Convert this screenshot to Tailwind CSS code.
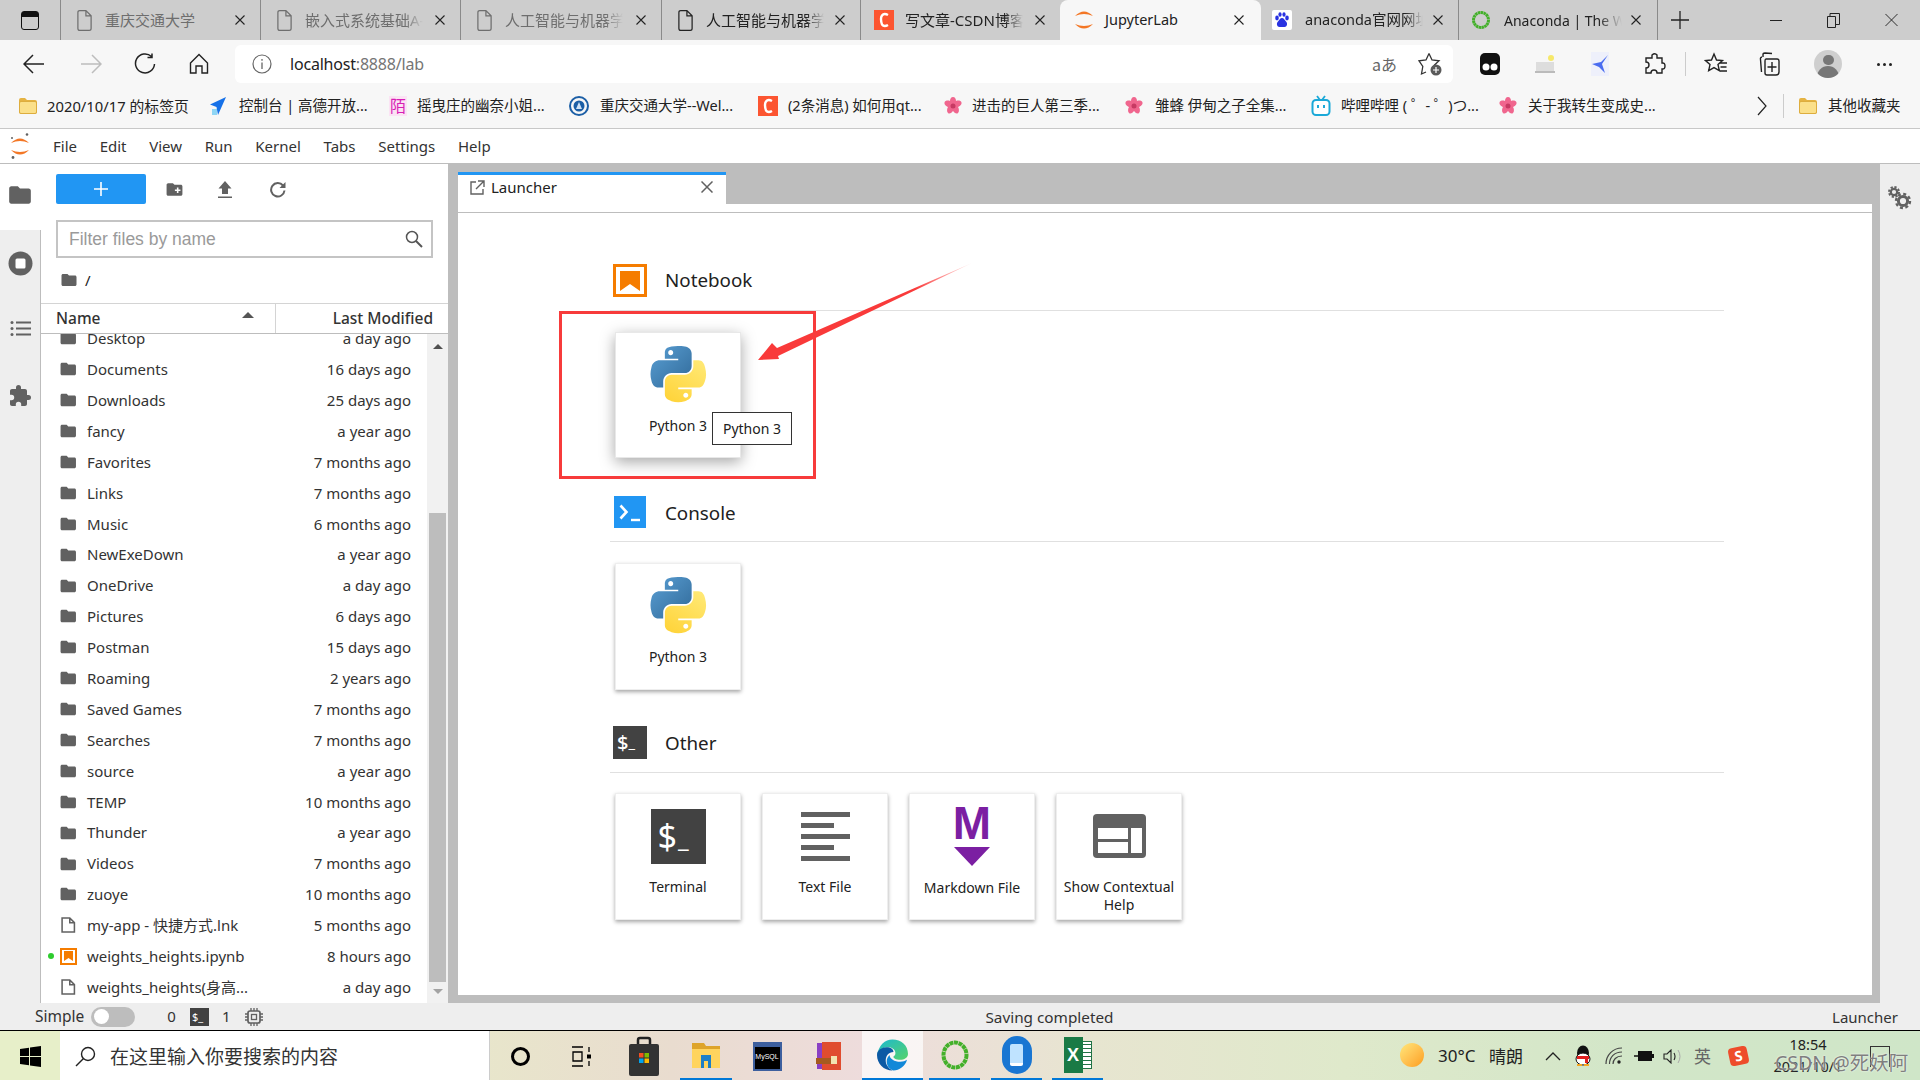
<!DOCTYPE html>
<html lang="zh-CN">
<head>
<meta charset="UTF-8">
<title>JupyterLab</title>
<script src="https://cdn.jsdelivr.net/npm/@tailwindcss/browser@4"></script>
</head>
<body class="relative w-[1920px] h-[1080px] overflow-hidden bg-white text-[#212121] font-['Noto_Sans','Noto_Sans_CJK_SC',sans-serif]">

<svg width="0" height="0" class="absolute">
  <defs>
    <linearGradient id="pyBlue" x1="0" y1="0" x2="1" y2="1"><stop offset="0" stop-color="#5a9fd4"/><stop offset="1" stop-color="#306998"/></linearGradient>
    <linearGradient id="pyYellow" x1="0.2" y1="1" x2="0.8" y2="0"><stop offset="0" stop-color="#ffd43b"/><stop offset="1" stop-color="#ffe873"/></linearGradient>
    <linearGradient id="arrowFade" gradientUnits="userSpaceOnUse" x1="972" y1="263" x2="915" y2="289"><stop offset="0" stop-color="#ff3b3b" stop-opacity="0.1"/><stop offset="1" stop-color="#f93a3a"/></linearGradient>
    <symbol id="folder" viewBox="0 0 24 24"><path fill="#616161" d="M10 4H4c-1.1 0-1.99.9-1.99 2L2 18c0 1.1.9 2 2 2h16c1.1 0 2-.9 2-2V8c0-1.1-.9-2-2-2h-8l-2-2z"/></symbol>
    <symbol id="page" viewBox="0 0 24 24"><path fill="none" stroke="#616161" stroke-width="2" d="M4 3h10l6 6v12H4zM14 3v6h6"/></symbol>
    <symbol id="python" viewBox="0 0 112 114">
      <path fill="url(#pyBlue)" d="M54.9 0C50.3 0 46 .4 42.1 1.1 30.8 3.1 28.7 7.3 28.7 15v10.3h26.8v3.4H18.6C10.8 28.7 4 33.3 1.9 42.3-.6 52.5-.7 58.8 1.9 69.5c1.9 7.9 6.4 13.6 14.2 13.6h9.3V70.8c0-8.8 7.6-16.6 16.7-16.6h26.8c7.5 0 13.4-6.1 13.4-13.6V15c0-7.3-6.1-12.7-13.4-13.9C64.3.3 59.5 0 54.9 0zM40.4 8.2c2.8 0 5 2.3 5 5.1 0 2.8-2.3 5.1-5 5.1-2.8 0-5-2.3-5-5.1 0-2.8 2.3-5.1 5-5.1z"/>
      <path fill="url(#pyYellow)" d="M85.6 28.7v11.9c0 9.2-7.8 17-16.8 17H42.1c-7.3 0-13.4 6.3-13.4 13.6v25.5c0 7.3 6.3 11.5 13.4 13.6 8.5 2.5 16.6 3 26.8 0 6.8-2 13.4-5.9 13.4-13.6V86.5H55.5v-3.4h40.2c7.8 0 10.7-5.4 13.4-13.6 2.8-8.4 2.7-16.5 0-27.2-1.9-7.8-5.6-13.6-13.4-13.6zM70.6 93.3c2.8 0 5 2.3 5 5.1 0 2.8-2.3 5.1-5 5.1-2.8 0-5-2.3-5-5.1 0-2.8 2.3-5.1 5-5.1z"/>
    </symbol>
    <symbol id="close" viewBox="0 0 12 12"><path fill="none" stroke="#222" stroke-width="1.1" d="M1.5 1.5l9 9M10.5 1.5l-9 9"/></symbol>
    <symbol id="tabdoc" viewBox="0 0 18 24"><path fill="none" stroke="currentColor" stroke-width="1.3" d="M2 3.5q0-2 2-2h6.5L16 7v13.500q0 2-2 2H4q-2 0-2-2zM10.500 1.500V7H16"/></symbol>
    <symbol id="flower" viewBox="0 0 20 20"><path fill="#f0668e" d="M10 1c2 0 3 2 3 4 2-1 5-.5 5.500 1.500S16.500 10.500 15 11c1 1.500 1.500 4.500 0 6s-4-.5-5-2c-1 1.500-3.500 3.500-5 2s-1-4.500 0-6C3.500 10.500 1 8.500 1.500 6.500S5 4 7 5c0-2 1-4 3-4z"/><circle cx="10" cy="10" r="2.500" fill="#c73a63"/></symbol>
    <symbol id="csdn" viewBox="0 0 20 20"><rect width="20" height="20" fill="#fc5531"/><path fill="none" stroke="#fff" stroke-width="2.400" d="M14 5Q10 2.800 8 5.500t0 9Q10 17.200 14 15"/></symbol>
    <symbol id="yfolder" viewBox="0 0 20 20"><path fill="#e5b342" d="M1 4q0-2 2-2h4l2 2h8q2 0 2 2v10q0 2-2 2H3q-2 0-2-2z"/><path fill="#fbe08a" stroke="#d8a633" stroke-width=".8" d="M1.500 7q0-1.500 1.500-1.500h14Q18.500 5.500 18.500 7v9q0 1.500-1.500 1.500H3Q1.500 17.500 1.500 16z"/></symbol>
  </defs>
</svg>

<!-- browser tabs -->
<div class="flex h-10 bg-[#cdcdcd] text-[15px]">
  <div class="w-[60px] h-full flex items-center justify-center">
    <div class="w-[18px] h-[19px] border-[1.5px] border-[#111] rounded-[3px] bg-gradient-to-b from-[#111] from-30% to-transparent to-30%"></div>
  </div>
  <div class="w-[200px] flex items-center pl-[15px] pr-[14px] border-l border-[#8a8a8a] text-[#6e6e6e]">
    <svg class="w-[17px] h-[23px] shrink-0"><use href="#tabdoc"/></svg>
    <span class="ml-[12px] w-[120px] whitespace-nowrap overflow-hidden">重庆交通大学</span>
    <svg class="ml-auto w-3 h-3 shrink-0"><use href="#close"/></svg>
  </div>
  <div class="w-[200px] flex items-center pl-[15px] pr-[14px] border-l border-[#8a8a8a] text-[#6e6e6e]">
    <svg class="w-[17px] h-[23px] shrink-0"><use href="#tabdoc"/></svg>
    <span class="ml-[12px] w-[118px] whitespace-nowrap overflow-hidden [mask-image:linear-gradient(90deg,#000_85%,transparent)]">嵌入式系统基础A-</span>
    <svg class="ml-auto w-3 h-3 shrink-0"><use href="#close"/></svg>
  </div>
  <div class="w-[201px] flex items-center pl-[15px] pr-[14px] border-l border-[#8a8a8a] text-[#6e6e6e]">
    <svg class="w-[17px] h-[23px] shrink-0"><use href="#tabdoc"/></svg>
    <span class="ml-[12px] w-[118px] whitespace-nowrap overflow-hidden [mask-image:linear-gradient(90deg,#000_85%,transparent)]">人工智能与机器学习</span>
    <svg class="ml-auto w-3 h-3 shrink-0"><use href="#close"/></svg>
  </div>
  <div class="w-[199px] flex items-center pl-[15px] pr-[14px] border-l border-[#8a8a8a] text-[#222]">
    <svg class="w-[17px] h-[23px] shrink-0"><use href="#tabdoc"/></svg>
    <span class="ml-[12px] w-[118px] whitespace-nowrap overflow-hidden [mask-image:linear-gradient(90deg,#000_85%,transparent)]">人工智能与机器学习</span>
    <svg class="ml-auto w-3 h-3 shrink-0"><use href="#close"/></svg>
  </div>
  <div class="w-[200px] flex items-center pl-[13px] pr-[14px] border-l border-[#8a8a8a] text-[#222]">
    <svg class="w-5 h-5 shrink-0"><use href="#csdn"/></svg>
    <span class="ml-[11px] w-[118px] whitespace-nowrap overflow-hidden [mask-image:linear-gradient(90deg,#000_85%,transparent)]">写文章-CSDN博客</span>
    <svg class="ml-auto w-3 h-3 shrink-0"><use href="#close"/></svg>
  </div>
  <div class="w-[201px] flex items-center pl-[14px] pr-[16px] bg-[#f7f7f7] rounded-t-[8px] text-[#222]">
    <svg class="w-5 h-5 shrink-0" viewBox="0 0 20 20"><path fill="#f37726" d="M1 6Q10-3 19 6 10 2 1 6zM1 14q9 9 18 0-9 4-18 0z"/></svg>
    <span class="ml-[11px] w-[110px] whitespace-nowrap text-[14.5px]">JupyterLab</span>
    <svg class="ml-auto w-3 h-3 shrink-0"><use href="#close"/></svg>
  </div>
  <div class="w-[197px] flex items-center pl-[11px] pr-[14px] text-[#222]">
    <svg class="w-5 h-5 shrink-0" viewBox="0 0 20 20"><rect width="20" height="20" rx="2" fill="#fff"/><g fill="#2932e1"><ellipse cx="5" cy="8" rx="1.800" ry="2.400"/><ellipse cx="8" cy="4.500" rx="1.600" ry="2.300"/><ellipse cx="12" cy="4.500" rx="1.600" ry="2.300"/><ellipse cx="15" cy="8" rx="1.800" ry="2.400"/><path d="M10 8c2 0 2.500 2 4 3.500 2 2 1 5.500-1.500 5.500H7.500C5 17 4 13.500 6 11.500 7.500 10 8 8 10 8z"/></g></svg>
    <span class="ml-[13px] w-[118px] text-[14.5px] whitespace-nowrap overflow-hidden [mask-image:linear-gradient(90deg,#000_85%,transparent)]">anaconda官网网址</span>
    <svg class="ml-auto w-3 h-3 shrink-0"><use href="#close"/></svg>
  </div>
  <div class="w-[199px] flex items-center pl-[12px] pr-[15px] border-l border-[#8a8a8a] text-[#222]">
    <svg class="w-5 h-[22px] shrink-0" viewBox="0 0 20 22"><circle cx="10" cy="11" r="7.500" fill="none" stroke="#43b02a" stroke-width="3" stroke-dasharray="2.500 .4"/></svg>
    <span class="ml-[13px] w-[118px] text-[14px] whitespace-nowrap overflow-hidden [mask-image:linear-gradient(90deg,#000_80%,transparent)]">Anaconda | The World's</span>
    <svg class="ml-auto w-3 h-3 shrink-0"><use href="#close"/></svg>
  </div>
  <div class="flex items-center pl-[13px] border-l border-[#8a8a8a]">
    <svg class="w-[18px] h-[18px]" viewBox="0 0 18 18"><path stroke="#222" stroke-width="1.300" d="M9 0v18M0 9h18"/></svg>
  </div>
  <div class="ml-auto flex items-center pr-[22px] gap-[45px]">
    <div class="w-3 h-px bg-[#222]"></div>
    <svg class="w-[13px] h-[15px]" viewBox="0 0 13 15"><path fill="none" stroke="#222" d="M.5 3.500h8v11h-8zM3 3.500V.5h9.500v11H9"/></svg>
    <svg class="w-[13px] h-[14px]" viewBox="0 0 14 14"><path stroke="#222" d="M.5.5l13 13M13.500.5l-13 13"/></svg>
  </div>
</div>

<!-- browser toolbar -->
<div class="flex items-center h-12 bg-[#f7f7f7]">
  <div class="w-[235px] flex items-center">
    <svg class="ml-[23px] w-[22px] h-[22px]" viewBox="0 0 22 22"><path fill="none" stroke="#222" stroke-width="1.500" d="M21 11H2M10 2l-9 9 9 9"/></svg>
    <svg class="ml-[35px] w-[22px] h-[22px]" viewBox="0 0 22 22"><path fill="none" stroke="#bdbdbd" stroke-width="1.500" d="M1 11h19M12 2l9 9-9 9"/></svg>
    <svg class="ml-[32px] w-[22px] h-[22px]" viewBox="0 0 22 22"><path fill="none" stroke="#222" stroke-width="1.500" d="M17.500 3.500A9.500 9.500 0 1 0 20.500 11M18 .5v4h-4.500"/></svg>
    <svg class="ml-[33px] w-[20px] h-[22px]" viewBox="0 0 20 22"><path fill="none" stroke="#222" stroke-width="1.400" d="M1.500 10L10 1.500l8.500 8.500v10h-5.500v-7H7v7H1.500z"/></svg>
  </div>
  <div class="flex items-center w-[1218px] h-[38px] bg-white rounded-md -mt-[1px]">
    <svg class="ml-[17px] w-[20px] h-[20px]" viewBox="0 0 20 20"><circle cx="10" cy="10" r="9" fill="none" stroke="#666" stroke-width="1.200"/><path stroke="#666" stroke-width="1.300" d="M10 8.500V15M10 5v1.800"/></svg>
    <span class="ml-[18px] text-[16px] tracking-[-0.2px] text-[#222]">localhost<span class="text-[#757575]">:8888/lab</span></span>
    <span class="ml-auto text-[16px] text-[#666] font-['Noto_Sans_CJK_JP',sans-serif]">aあ</span>
    <svg class="ml-[21px] mr-[11px] w-[24px] h-[24px]" viewBox="0 0 24 24"><path fill="none" stroke="#333" stroke-width="1.300" d="M11 1.500l3 6.500 7 .8-5 4.700 1 4M8 20l-4.500 2 1.300-7.500L1 8.800 8 8l3-6.500"/><circle cx="18" cy="18" r="5.500" fill="#5a5a5a"/><path stroke="#fff" stroke-width="1.200" d="M18 15v6M15 18h6"/></svg>
  </div>
  <svg class="ml-[26px] w-[22px] h-[26px]" viewBox="0 0 22 26"><rect x="1" y="2" width="20" height="22" rx="5" fill="#111"/><circle cx="7" cy="16" r="3.500" fill="#fff"/><circle cx="15" cy="16" r="3.500" fill="#fff"/></svg>
  <svg class="ml-[32px] w-[24px] h-[24px]" viewBox="0 0 24 24"><path fill="#ddd" d="M3 10h18v9H3z"/><path fill="#bbb" d="M2 19h20v2H2z"/><circle cx="18" cy="6" r="3" fill="#f6e86a"/></svg>
  <svg class="ml-[31px] w-[24px] h-[26px]" viewBox="0 0 24 26"><rect x="3" y="1" width="18" height="24" fill="#eef0fb"/><path fill="#4a6cf0" d="M20 4l-6 9 3 9-6-6-7-3 9-2z"/></svg>
  <svg class="ml-[31px] w-[24px] h-[24px]" viewBox="0 0 24 24"><path fill="none" stroke="#222" stroke-width="1.400" d="M9 3q3-2.500 5 0v3h5v5q3-.5 3 3t-3 3v4h-5q0-3-3-3t-3 3H3v-5q3 0 3-3T3 10V6h6z"/></svg>
  <div class="ml-[18px] w-px h-6 bg-[#ccc]"></div>
  <svg class="ml-[18px] w-[24px] h-[24px]" viewBox="0 0 24 24"><path fill="none" stroke="#222" stroke-width="1.400" d="M10 2l2.500 6 6 .6-4.500 4 1.300 6-5.300-3-5.300 3 1.300-6-4.500-4 6-.6zM16 11h7M16.500 15h6M16 19h7"/></svg>
  <svg class="ml-[30px] w-[24px] h-[26px]" viewBox="0 0 24 26"><path fill="none" stroke="#222" stroke-width="1.400" d="M5 6V3.500Q5 2 7 2l7 .5M4 6q-2 .5-1.500 2.500l1 12.500M8 8h11q2 0 2 2v11q0 3-3 3H9q-2 0-2-2V10q0-2 1-2zM14 11v10M9.500 16h9"/></svg>
  <div class="ml-[32px] w-[28px] h-[28px] rounded-full overflow-hidden bg-[#cfcfcf] flex flex-col items-center">
    <div class="mt-[5px] w-[11px] h-[12px] rounded-full bg-[#777]"></div>
    <div class="mt-[1px] w-[22px] h-[14px] rounded-t-full bg-[#777]"></div>
  </div>
  <div class="ml-[35px] flex gap-[3px]">
    <div class="w-[3px] h-[3px] rounded-full bg-[#222]"></div>
    <div class="w-[3px] h-[3px] rounded-full bg-[#222]"></div>
    <div class="w-[3px] h-[3px] rounded-full bg-[#222]"></div>
  </div>
</div>

<!-- bookmarks -->
<div class="flex items-center h-[41px] pb-[4px] pl-[18px] bg-[#f7f7f7] border-b border-[#c8c8c8] text-[14.5px] text-[#222] whitespace-nowrap">
  <div class="w-[191px] flex items-center gap-[9px] text-[14.800px]"><svg class="w-5 h-5 shrink-0"><use href="#yfolder"/></svg>2020/10/17 的标签页</div>
  <div class="w-[180px] flex items-center gap-[12px]"><svg class="w-[18px] h-5 shrink-0" viewBox="0 0 18 20"><path fill="#8fd6f5" d="M3 13h5v6H3z"/><path fill="#1671e8" d="M17 1L9 19 7.500 11 1 8.500z"/></svg>控制台 | 高德开放...</div>
  <div class="w-[180px] flex items-center gap-[10px]"><div class="w-[18px] h-5 shrink-0 bg-[#fbe3f4] text-[#d81eb5] text-[16px] leading-5 text-center">陌</div>摇曳庄的幽奈小姐...</div>
  <div class="w-[189px] flex items-center gap-[11px]"><svg class="w-5 h-5 shrink-0" viewBox="0 0 20 20"><circle cx="10" cy="10" r="9" fill="none" stroke="#1c5fa6" stroke-width="2"/><circle cx="10" cy="10" r="5.500" fill="#1c5fa6"/><path fill="#cfe2f5" d="M10 6l3 7H7z"/></svg>重庆交通大学--Wel...</div>
  <div class="w-[185px] flex items-center gap-[10px]"><svg class="w-5 h-5 shrink-0"><use href="#csdn"/></svg>(2条消息) 如何用qt...</div>
  <div class="w-[181px] flex items-center gap-[9px]"><svg class="w-[20px] h-5 shrink-0"><use href="#flower"/></svg>进击的巨人第三季...</div>
  <div class="w-[187px] flex items-center gap-[11px]"><svg class="w-[20px] h-5 shrink-0"><use href="#flower"/></svg>雏蜂 伊甸之子全集...</div>
  <div class="w-[187px] flex items-center gap-[10px]"><svg class="w-[20px] h-[22px] shrink-0" viewBox="0 0 20 22"><path stroke="#1ca9d8" stroke-width="1.800" d="M6 1l3 4M14 1l-3 4"/><rect x="1.500" y="5" width="17" height="15" rx="3.500" fill="#fff" stroke="#1ca9d8" stroke-width="2"/><path stroke="#1ca9d8" stroke-width="2" d="M7 10v3M13 10v3"/></svg>哔哩哔哩 ( ゜- ゜)つ...</div>
  <div class="w-[259px] flex items-center gap-[10px]"><svg class="w-[20px] h-5 shrink-0"><use href="#flower"/></svg>关于我转生变成史...</div>
  <svg class="w-[10px] h-[20px]" viewBox="0 0 10 20"><path fill="none" stroke="#222" stroke-width="1.200" d="M1 1l8 9-8 9"/></svg>
  <div class="ml-[16px] w-px h-[24px] bg-[#ccc]"></div>
  <svg class="ml-[14px] w-5 h-5 shrink-0"><use href="#yfolder"/></svg>
  <span class="ml-[10px]">其他收藏夹</span>
</div>

<!-- jupyter menu -->
<div class="flex items-center h-[35px] border-b border-[#bdbdbd] text-[15px] text-[#333]">
  <svg class="ml-[11px] w-[20px] h-[27px]" viewBox="0 0 20 27"><path fill="#f37726" d="M0 10Q9 1 18 10 9 6 0 10zM0 17q9 9 18 0-9 4-18 0z"/><circle cx="16" cy="1.500" r="1.300" fill="#616161"/><circle cx="1" cy="5" r="1" fill="#616161"/><circle cx="2" cy="24.500" r="1.400" fill="#616161"/></svg>
  <div class="ml-[22px] flex gap-[22.700px] pt-[1px]">
    <span>File</span><span>Edit</span><span>View</span><span>Run</span><span>Kernel</span><span>Tabs</span><span>Settings</span><span>Help</span>
  </div>
</div>

<!-- jupyter main -->
<div class="flex h-[839px] bg-[#bdbdbd]">
  <div class="w-[41px] bg-[#eeeeee] flex flex-col">
    <div class="h-[66px] bg-white flex items-center justify-center pr-[1px]">
      <svg class="w-[26px] h-[26px] mt-[-4px]"><use href="#folder"/></svg>
    </div>
    <div class="flex-1 border-r border-[#bdbdbd] flex flex-col items-center">
      <svg class="mt-[21px] w-[25px] h-[25px]" viewBox="0 0 25 25"><circle cx="12.500" cy="12.500" r="12" fill="#616161"/><rect x="7.500" y="7.500" width="10" height="10" rx="1.500" fill="#fff"/></svg>
      <svg class="mt-[44px] w-[21px] h-[17px]" viewBox="0 0 21 17"><path fill="#616161" d="M6 1.500h15v2H6zM6 7.500h15v2H6zM6 13.500h15v2H6z"/><circle cx="2" cy="2.500" r="1.500" fill="#616161"/><circle cx="2" cy="8.500" r="1.500" fill="#616161"/><circle cx="2" cy="14.500" r="1.500" fill="#616161"/></svg>
      <svg class="mt-[47px] w-[24px] h-[24px]" viewBox="0 0 24 24"><path fill="#616161" d="M20.500 11H19V7c0-1.100-.9-2-2-2h-4V3.500a2.500 2.500 0 0 0-5 0V5H4c-1.100 0-2 .9-2 2v3.800h1.500a2.700 2.700 0 0 1 0 5.400H2V20c0 1.100.9 2 2 2h3.800v-1.500a2.700 2.700 0 0 1 5.400 0V22H17c1.100 0 2-.9 2-2v-4h1.500a2.500 2.500 0 0 0 0-5z"/></svg>
    </div>
  </div>

  <!-- file browser -->
  <div class="w-[407px] bg-white flex flex-col">
    <div class="flex items-center h-[56px] pt-[10px] pb-[16px] pl-[15px] shrink-0">
      <div class="w-[90px] h-[30px] bg-[#2196f3] rounded-[2px] flex items-center justify-center">
        <svg class="w-[16px] h-[16px] ml-[-1px]" viewBox="0 0 16 16"><path stroke="#fff" stroke-width="1.600" d="M8 1v14M1 8h14"/></svg>
      </div>
      <svg class="ml-[19px] w-[19px] h-[19px]" viewBox="0 0 24 24"><path fill="#616161" d="M10 4H4c-1.100 0-2 .9-2 2v12c0 1.100.9 2 2 2h16c1.100 0 2-.9 2-2V8c0-1.100-.9-2-2-2h-8l-2-2z"/><path stroke="#fff" stroke-width="2" d="M16 9.500v7M12.500 13h7"/></svg>
      <svg class="ml-[33px] w-[16px] h-[19px]" viewBox="0 0 16 19"><path fill="#616161" d="M8 1l6.500 7.500H11V14H5V8.500H1.500zM1 16.500h14V18H1z"/></svg>
      <svg class="ml-[36px] w-[17px] h-[17px]" viewBox="0 0 17 17"><path fill="none" stroke="#616161" stroke-width="2" d="M14 4.500a6.700 6.700 0 1 0 1.500 5"/><path fill="#616161" d="M16.500 1v6h-6z"/></svg>
    </div>
    <div class="ml-[15px] w-[377px] h-[38px] border-2 border-[#c4c4c4] flex items-center pl-[11px] pr-[8px] shrink-0">
      <span class="text-[17.500px] text-[#9a9a9a] font-['Liberation_Sans',sans-serif]">Filter files by name</span>
      <svg class="ml-auto w-[18px] h-[18px]" viewBox="0 0 18 18"><circle cx="7" cy="7" r="5.500" fill="none" stroke="#555" stroke-width="1.500"/><path stroke="#555" stroke-width="2" d="M11 11l6 6"/></svg>
    </div>
    <div class="flex items-center h-[45px] pb-[1px] pl-[19px] shrink-0">
      <svg class="w-[18px] h-[18px]" viewBox="0 0 24 24"><use href="#folder"/></svg>
      <span class="ml-[7px] text-[15px]">/</span>
    </div>
    <div class="flex h-[31px] border-y border-[#d4d4d4] border-b-[#bdbdbd] text-[15.500px] font-medium text-[#333] shrink-0">
      <div class="w-[235px] relative pl-[15px] border-r border-[#d4d4d4] flex items-center">Name
        <div class="absolute right-[21px] top-[8px] w-0 h-0 border-x-[6px] border-x-transparent border-b-[6px] border-b-[#555]"></div>
      </div>
      <div class="flex-1 text-right pr-[15px] flex items-center justify-end">Last Modified</div>
    </div>
    <div class="flex flex-1 min-h-0">
      <div id="rows" class="w-[386px] overflow-hidden text-[15px] text-[#333]"></div>
      <div class="w-[21px] bg-[#f1f1f1] flex flex-col items-center">
        <div class="mt-[10px] w-0 h-0 border-x-[5px] border-x-transparent border-b-[5px] border-b-[#505050]"></div>
        <div class="mt-[164px] w-[17px] h-[469px] bg-[#bdbdbd]"></div>
        <div class="mt-[7px] w-0 h-0 border-x-[5px] border-x-transparent border-t-[5px] border-t-[#a3a3a3]"></div>
      </div>
    </div>
  </div>

  <!-- dock -->
  <div class="ml-[10px] w-[1414px] flex flex-col h-[831px]">
    <div class="h-10 pt-2 shrink-0">
      <div class="w-[268px] h-8 bg-white border-t-[3px] border-[#2196f3] flex items-center pl-[12px] pr-[13px] pb-[5px] text-[15px]">
        <svg class="w-[15px] h-[15px]" viewBox="0 0 15 15"><path fill="none" stroke="#616161" stroke-width="1.400" d="M6 2H1v12h12V9M8 1h6v6M14 1L6 9"/></svg>
        <span class="ml-[6px]">Launcher</span>
        <svg class="ml-auto w-[12px] h-[12px]" viewBox="0 0 12 12"><path stroke="#616161" stroke-width="1.500" d="M.5.5l11 11M11.500.5l-11 11"/></svg>
      </div>
    </div>
    <div class="flex-1 bg-white flex flex-col">
      <div class="h-[9px] border-b border-[#bdbdbd] shrink-0"></div>
      <div class="ml-[152px] w-[1114px]">
        <!-- Notebook -->
        <div class="mt-[51px] flex items-center h-[33px] pb-[13px] border-b border-[#e0e0e0] box-content">
          <div class="ml-[3px] w-[34px] h-[33px] border-[3px] border-[#f57c00] flex items-center justify-center">
            <svg class="w-5 h-5" viewBox="0 0 20 20"><path fill="#f57c00" d="M0 0h20v20l-10-7-10 7z"/></svg>
          </div>
          <span class="ml-[18px] text-[18.800px]">Notebook</span>
        </div>
        <div class="mt-[21px] flex gap-[21px] pl-[5px] text-[14px]">
          <div class="relative w-[126px] h-[126px] bg-white border border-[#e8e8e8] shadow-[0_4px_14px_rgba(0,0,0,0.35)] flex flex-col items-center pt-[13px]">
            <svg class="w-[57px] h-[57px] shrink-0"><use href="#python"/></svg>
            <span class="mt-[14px] leading-[18px] text-center">Python 3</span>
            <div class="absolute left-[96px] top-[79px] w-[80px] h-[33px] bg-white border border-[#333] flex items-center justify-center">Python 3</div>
          </div>
        </div>
        <!-- Console -->
        <div class="mt-[38px] flex items-center h-[32px] pb-[13px] border-b border-[#e0e0e0] box-content">
          <svg class="ml-[4px] w-[32px] h-[32px]" viewBox="0 0 32 32"><rect width="32" height="32" fill="#2196f3"/><path fill="none" stroke="#fff" stroke-width="2.600" d="M6.500 9.500l6 6.500-6 6.500"/><path stroke="#fff" stroke-width="2.400" d="M17 24h9"/></svg>
          <span class="ml-[19px] pt-[2px] text-[18.800px]">Console</span>
        </div>
        <div class="mt-[21px] flex gap-[21px] pl-[5px] text-[14px]">
          <div class="w-[126px] h-[127px] bg-white border border-[#eeeeee] shadow-[0_2px_4px_rgba(0,0,0,0.35)] flex flex-col items-center pt-[13px]">
            <svg class="w-[57px] h-[57px] shrink-0"><use href="#python"/></svg>
            <span class="mt-[14px] leading-[18px] text-center">Python 3</span>
          </div>
        </div>
        <!-- Other -->
        <div class="mt-[36px] flex items-center h-[33px] pb-[13px] border-b border-[#e0e0e0] box-content">
          <div class="ml-[3px] w-[34px] h-[33px] bg-[#424242] text-white flex items-center pl-[4px] text-[20px] font-medium">$<span class="text-[15px]">_</span></div>
          <span class="ml-[18px] pt-[2px] text-[18.800px]">Other</span>
        </div>
        <div class="mt-[20px] flex gap-[21px] pl-[5px] text-[14px]">
          <div class="w-[126px] h-[127px] bg-white border border-[#eeeeee] shadow-[0_2px_4px_rgba(0,0,0,0.35)] flex flex-col items-center pt-[15px]">
            <div class="w-[55px] h-[55px] bg-[#424242] text-white flex items-center pl-[7px] text-[34px] shrink-0">$<span class="text-[24px] ml-[1px] mt-[2px]">_</span></div>
            <span class="mt-[14px] leading-[18px] text-center">Terminal</span>
          </div>
          <div class="w-[126px] h-[127px] bg-white border border-[#eeeeee] shadow-[0_2px_4px_rgba(0,0,0,0.35)] flex flex-col items-center pt-[18px]">
            <svg class="w-[49px] h-[49px] shrink-0 mb-[3px]" viewBox="0 0 49 49"><path fill="#616161" d="M0 0h49v5H0zM0 11h33v5H0zM0 22h49v5H0zM0 33h33v5H0zM0 44h49v5H0z"/></svg>
            <span class="mt-[14px] leading-[18px] text-center">Text File</span>
          </div>
          <div class="w-[126px] h-[127px] bg-white border border-[#eeeeee] shadow-[0_2px_4px_rgba(0,0,0,0.35)] flex flex-col items-center pt-[10px]">
            <div class="h-[38px] text-[46px] leading-[38px] font-bold text-[#7b1fa2] font-['Liberation_Sans',sans-serif] shrink-0">M</div>
            <svg class="mt-[5px] w-[36px] h-[19px] shrink-0" viewBox="0 0 36 19"><path fill="#7b1fa2" d="M0 0h36L18 19z"/></svg>
            <span class="mt-[13px] leading-[18px] text-center">Markdown File</span>
          </div>
          <div class="w-[126px] h-[127px] bg-white border border-[#eeeeee] shadow-[0_2px_4px_rgba(0,0,0,0.35)] flex flex-col items-center pt-[20px]">
            <svg class="w-[53px] h-[44px] shrink-0 mb-[6px]" viewBox="0 0 53 44"><rect width="53" height="44" rx="4" fill="#616161"/><path fill="#fff" d="M5 14h30v11H5zM5 28h30v11H5zM38 14h11v25H38z"/></svg>
            <span class="mt-[14px] leading-[18px] text-center">Show Contextual Help</span>
          </div>
        </div>
      </div>
    </div>
  </div>

  <!-- right rail -->
  <div class="ml-[8px] w-[40px] bg-[#eeeeee] flex">
    <svg class="mt-[20px] ml-[7px] w-[26px] h-[26px]" viewBox="0 0 26 26"><g fill="none" stroke="#616161"><circle cx="7" cy="8" r="3.200" stroke-width="2.200"/><circle cx="7" cy="8" r="5" stroke-width="2" stroke-dasharray="2.200 1.700"/><circle cx="16" cy="17" r="4.600" stroke-width="3"/><circle cx="16" cy="17" r="7" stroke-width="2.400" stroke-dasharray="3 2.500"/></g></svg>
  </div>
</div>

<!-- status bar -->
<div class="flex items-center h-[27px] bg-[#eeeeee] text-[15px] text-[#333]">
  <span class="ml-[35px] text-[15.500px]">Simple</span>
  <div class="ml-[7px] w-[44px] h-5 rounded-full bg-[#bdbdbd] flex items-center pl-[3px]"><div class="w-[15px] h-[15px] rounded-full bg-white"></div></div>
  <span class="ml-[32px]">0</span>
  <div class="ml-[14px] w-[19px] h-[18px] bg-[#424242] text-white text-[11px] leading-[18px] pl-[2px]">$_</div>
  <span class="ml-[13px]">1</span>
  <svg class="ml-[15px] w-[18px] h-[18px]" viewBox="0 0 18 18"><rect x="3" y="3" width="12" height="12" rx="2" fill="none" stroke="#616161" stroke-width="1.700"/><rect x="6.500" y="6.500" width="5" height="5" fill="none" stroke="#616161" stroke-width="1.300"/><path stroke="#616161" stroke-width="1.300" d="M6 0v3M9 0v3M12 0v3M6 15v3M9 15v3M12 15v3M0 6h3M0 9h3M0 12h3M15 6h3M15 9h3M15 12h3"/></svg>
  <span class="ml-[722px] text-[15.300px] pt-[1px]">Saving completed</span>
  <span class="ml-auto mr-[22px] pt-[1px]">Launcher</span>
</div>

<!-- windows taskbar -->
<div class="flex h-[51px] border-t border-black bg-[linear-gradient(90deg,#e3ebc3_0%,#e8e6cb_25%,#e9dccf_35%,#eedcdc_45%,#e7e5d0_57%,#dfe9cb_70%,#d2e6c8_85%,#cfe6c8_100%)]">
  <div class="w-[60px] bg-[#e7efc9] flex items-center justify-center">
    <svg class="w-[21px] h-[21px]" viewBox="0 0 21 21"><path fill="#000" d="M0 3l9-1.300V10H0zM10 1.500L21 0v10H10zM0 11h9v8.300L0 18zM10 11h11v10l-11-1.500z"/></svg>
  </div>
  <div class="w-[430px] bg-white flex items-center border-r border-[#ccc]">
    <svg class="ml-[15px] w-[21px] h-[21px]" viewBox="0 0 21 21"><circle cx="13" cy="8" r="6.500" fill="none" stroke="#222" stroke-width="1.400"/><path stroke="#222" stroke-width="1.500" d="M8.500 12.500L1 20"/></svg>
    <span class="ml-[14px] text-[19px] text-[#333] font-['Noto_Sans_CJK_SC',sans-serif]">在这里输入你要搜索的内容</span>
  </div>
  <div class="w-[60px] flex items-center justify-center"><div class="w-[19px] h-[19px] rounded-full border-[3px] border-black"></div></div>
  <div class="w-[62px] flex items-center justify-center">
    <svg class="w-[20px] h-[21px]" viewBox="0 0 20 21"><path fill="none" stroke="#000" stroke-width="1.300" d="M1 1h11M1 20h11M2 6h9v9H2zM18 1v5M18 15v5"/><rect x="16" y="8.500" width="4" height="4"/></svg>
  </div>
  <div class="w-[63px] flex items-center justify-center">
    <svg class="w-[30px] h-[40px]" viewBox="0 0 30 40"><path fill="none" stroke="#222" stroke-width="2.500" d="M9 9V4q0-2 2-2h8q2 0 2 2v5"/><rect y="8" width="30" height="32" rx="2" fill="#333"/><path fill="#f25022" d="M10 17h4.500v4.500H10z"/><path fill="#7fba00" d="M15.500 17H20v4.500h-4.500z"/><path fill="#00a4ef" d="M10 22.500h4.500V27H10z"/><path fill="#ffb900" d="M15.500 22.500H20V27h-4.500z"/></svg>
  </div>
  <div class="ml-[5px] mr-[4px] w-[52px] flex items-center justify-center border-b-[3px] border-[#0078d7]">
    <svg class="w-[28px] h-[28px]" viewBox="0 0 28 28"><path fill="#dea42a" d="M0 2h12l2 3h14v6H0z"/><path fill="#ffd45e" d="M0 8h28v19H0z"/><path fill="#1d7fc8" d="M9 14h10v13h-3v-7h-4v7H9z"/></svg>
  </div>
  <div class="w-[62px] flex items-center justify-center">
    <div class="w-[29px] h-[29px] bg-black border-2 border-[#3d5f9e] border-t-[5px] text-white text-[7px] leading-[20px] text-center font-['Liberation_Sans',sans-serif]">MySQL</div>
  </div>
  <div class="w-[62px] flex items-center justify-center">
    <svg class="w-[26px] h-[32px]" viewBox="0 0 26 32"><path fill="#8a3fc4" d="M1 3h5v26H1z"/><path fill="#e04c2f" d="M6 2h19v28H6z"/><path fill="#a55a20" d="M0 18h20v6H0z"/><path fill="#f2e3b0" d="M15 16h6v8h-6z"/></svg>
  </div>
  <div class="ml-[2px] -mr-[1px] w-[61px] flex items-center justify-center bg-white/70 border-b-[3px] border-[#0078d7]">
    <svg class="w-[31px] h-[32px]" viewBox="0 0 32 32"><defs><linearGradient id="edgeG" x1="0" y1="0" x2="1" y2="1"><stop offset="0" stop-color="#1db8d0"/><stop offset="1" stop-color="#56d36a"/></linearGradient></defs><path fill="url(#edgeG)" d="M16 0c9 0 16 6 16 15 0 4-4 6-8 6-5 0-7-2-7-3 0-1 2-1 2-4 0-4-4-6-8-6-5 0-9 3-11 8C2 6 8 0 16 0z"/><path fill="#0c59a4" d="M0 16c0-5 5-8 10-8 4 0 7 2 7 5-5 0-8 4-8 9 0 4 3 8 7 10C7 32 0 25 0 16z"/><path fill="#1288d8" d="M24 23c3 0 5-.7 7-2-2 7-8 11-14 11-4-1-7-5-7-9 0-3 1-5 3-7 0 4 5 7 11 7z"/></svg>
  </div>
  <div class="ml-[7px] mr-[5px] w-[51px] flex items-center justify-center border-b-[3px] border-[#0078d7]">
    <svg class="w-[28px] h-[30px]" viewBox="0 0 28 30"><ellipse cx="14" cy="15" rx="11.500" ry="12.500" fill="none" stroke="#43b02a" stroke-width="4" stroke-dasharray="4 .6"/></svg>
  </div>
  <div class="ml-[6px] mr-[4px] w-[51px] flex items-center justify-center border-b-[3px] border-[#0078d7]">
    <div class="w-[30px] h-[38px] rounded-full bg-[#1976d2] flex items-center justify-center"><div class="w-[13px] h-[22px] rounded-[2px] bg-[#bfe3ff] border-b-[3px] border-white"></div></div>
  </div>
  <div class="ml-[6px] mr-[6px] w-[51px] flex items-center justify-center border-b-[3px] border-[#0078d7]">
    <div class="relative w-[28px] h-[36px] flex items-center">
      <div class="ml-[12px] w-[16px] h-[28px] bg-[repeating-linear-gradient(0deg,#fff_0_3px,#217346_3px_4px)] border border-[#217346]"></div>
      <div class="absolute left-0 top-0 w-[19px] h-[36px] bg-[#1a7a45] text-white text-[18px] font-bold leading-[36px] text-center font-['Liberation_Sans',sans-serif]">X</div>
    </div>
  </div>
  <div class="ml-[291px] w-6 h-6 mt-[12px] rounded-full bg-gradient-to-br from-[#ffe77a] to-[#fc9d13] shrink-0"></div>
  <span class="ml-[14px] w-[51px] text-[17px] leading-[49px] text-[#222]">30°C</span>
  <span class="w-[50px] text-[17px] leading-[49px] text-[#222] font-['Noto_Sans_CJK_SC',sans-serif]">晴朗</span>
  <div class="w-[28px] flex items-center justify-center"><svg class="w-[16px] h-[9px]" viewBox="0 0 16 9"><path fill="none" stroke="#222" stroke-width="1.300" d="M1 8l7-7 7 7"/></svg></div>
  <div class="w-[32px] flex items-center justify-center">
    <svg class="w-[18px] h-[22px]" viewBox="0 0 18 22"><ellipse cx="9" cy="8" rx="6" ry="7.500" fill="#111"/><ellipse cx="9" cy="14" rx="7" ry="6" fill="#fff" stroke="#111"/><path fill="#e02020" d="M3 11h12v3H3zM11 13h3v5h-3z"/><path fill="#f5a623" d="M3 19h5v2H3zM10 19h5v2h-5z"/></svg>
  </div>
  <div class="w-[30px] flex items-center justify-center">
    <svg class="w-[18px] h-[18px]" viewBox="0 0 18 18"><path fill="none" stroke="#444" stroke-width="1.200" d="M1 17C1 8 8 1 17 1M4.500 17c0-7 5-12 12.500-12M8 17c0-4 3-8 9-8"/><circle cx="14" cy="15" r="1.700" fill="#222"/></svg>
  </div>
  <div class="w-[30px] flex items-center justify-center">
    <svg class="w-[20px] h-[14px]" viewBox="0 0 20 14"><rect x="4" y="2" width="14" height="10" fill="#111"/><rect x="18" y="5" width="2" height="4" fill="#111"/><path stroke="#111" stroke-width="1.500" d="M0 7h4"/></svg>
  </div>
  <div class="w-[27px] flex items-center justify-center">
    <svg class="w-[20px] h-[15px]" viewBox="0 0 20 15"><path fill="none" stroke="#222" stroke-width="1.100" d="M1 5h3l4-4v13l-4-4H1zM11 4q2 3.500 0 7"/><path fill="none" stroke="#aaa" d="M15 1q4 6.500 0 13"/></svg>
  </div>
  <span class="w-[33px] text-center text-[17px] leading-[49px] text-[#666] font-['Noto_Sans_CJK_SC',sans-serif]">英</span>
  <div class="w-[39px] flex items-center justify-center"><div class="w-[19px] h-[18px] rounded-[4px] bg-[#ee4c2b] -rotate-12 text-white text-[14px] leading-[18px] text-center font-bold">S</div></div>
  <div class="w-[100px] flex flex-col items-center text-[14.500px] leading-[22px] text-[#222] pt-[2px]">
    <span>18:54</span><span>2021/10/1</span>
  </div>
  <div class="mt-[15px] ml-[12px] w-[20px] h-[21px] border border-[#333] border-b-0"></div>
</div>

<!-- overlays: annotation rectangle, arrow, watermark -->
<div class="absolute left-[559px] top-[311px] w-[257px] h-[168px] border-[3px] border-[#f73b3b]"></div>
<svg class="absolute left-0 top-0 pointer-events-none" width="1920" height="1080"><path fill="url(#arrowFade)" d="M972 263L777 348 772 343 758 360 779 359 778 356z"/></svg>
<div class="absolute left-[1775px] top-[1048px] text-[19.500px] text-[#7f7f7f] [text-shadow:0_0_2px_#fff]">CSDN @死妖阿</div>

<script>
  // file browser rows
  const files = [
    ['folder', 'Desktop', 'a day ago'], ['folder', 'Documents', '16 days ago'], ['folder', 'Downloads', '25 days ago'],
    ['folder', 'fancy', 'a year ago'], ['folder', 'Favorites', '7 months ago'], ['folder', 'Links', '7 months ago'],
    ['folder', 'Music', '6 months ago'], ['folder', 'NewExeDown', 'a year ago'], ['folder', 'OneDrive', 'a day ago'],
    ['folder', 'Pictures', '6 days ago'], ['folder', 'Postman', '15 days ago'], ['folder', 'Roaming', '2 years ago'],
    ['folder', 'Saved Games', '7 months ago'], ['folder', 'Searches', '7 months ago'], ['folder', 'source', 'a year ago'],
    ['folder', 'TEMP', '10 months ago'], ['folder', 'Thunder', 'a year ago'], ['folder', 'Videos', '7 months ago'],
    ['folder', 'zuoye', '10 months ago'], ['page', 'my-app - 快捷方式.lnk', '5 months ago'],
    ['nb', 'weights_heights.ipynb', '8 hours ago'], ['page', 'weights_heights(身高...', 'a day ago'],
  ];
  const icon = (type) => type === 'nb'
    ? '<div class="w-[17px] h-[17px] border-2 border-[#f57c00] flex items-center justify-center"><svg class="w-[9px] h-[10px]" viewBox="0 0 9 10"><path fill="#f57c00" d="M0 0h9v10L4.500 7 0 10z"/></svg></div>'
    : `<svg class="w-[20px] h-[20px] -ml-[1.500px]"><use href="#${type}"/></svg>`;
  document.getElementById('rows').innerHTML = files.map(([type, name, time], i) => `
    <div class="relative flex items-center h-[30.9px] pl-[19px] pr-[16px] ${i === 0 ? 'mt-[-11px]' : ''}">
      ${type === 'nb' ? '<div class="absolute left-[7px] w-[6px] h-[6px] rounded-full bg-[#2ecc2e]"></div>' : ''}
      <div class="w-[17px] flex justify-center">${icon(type)}</div>
      <span class="ml-[10px]">${name}</span>
      <span class="ml-auto">${time}</span>
    </div>`).join('');
</script>
</body>
</html>
